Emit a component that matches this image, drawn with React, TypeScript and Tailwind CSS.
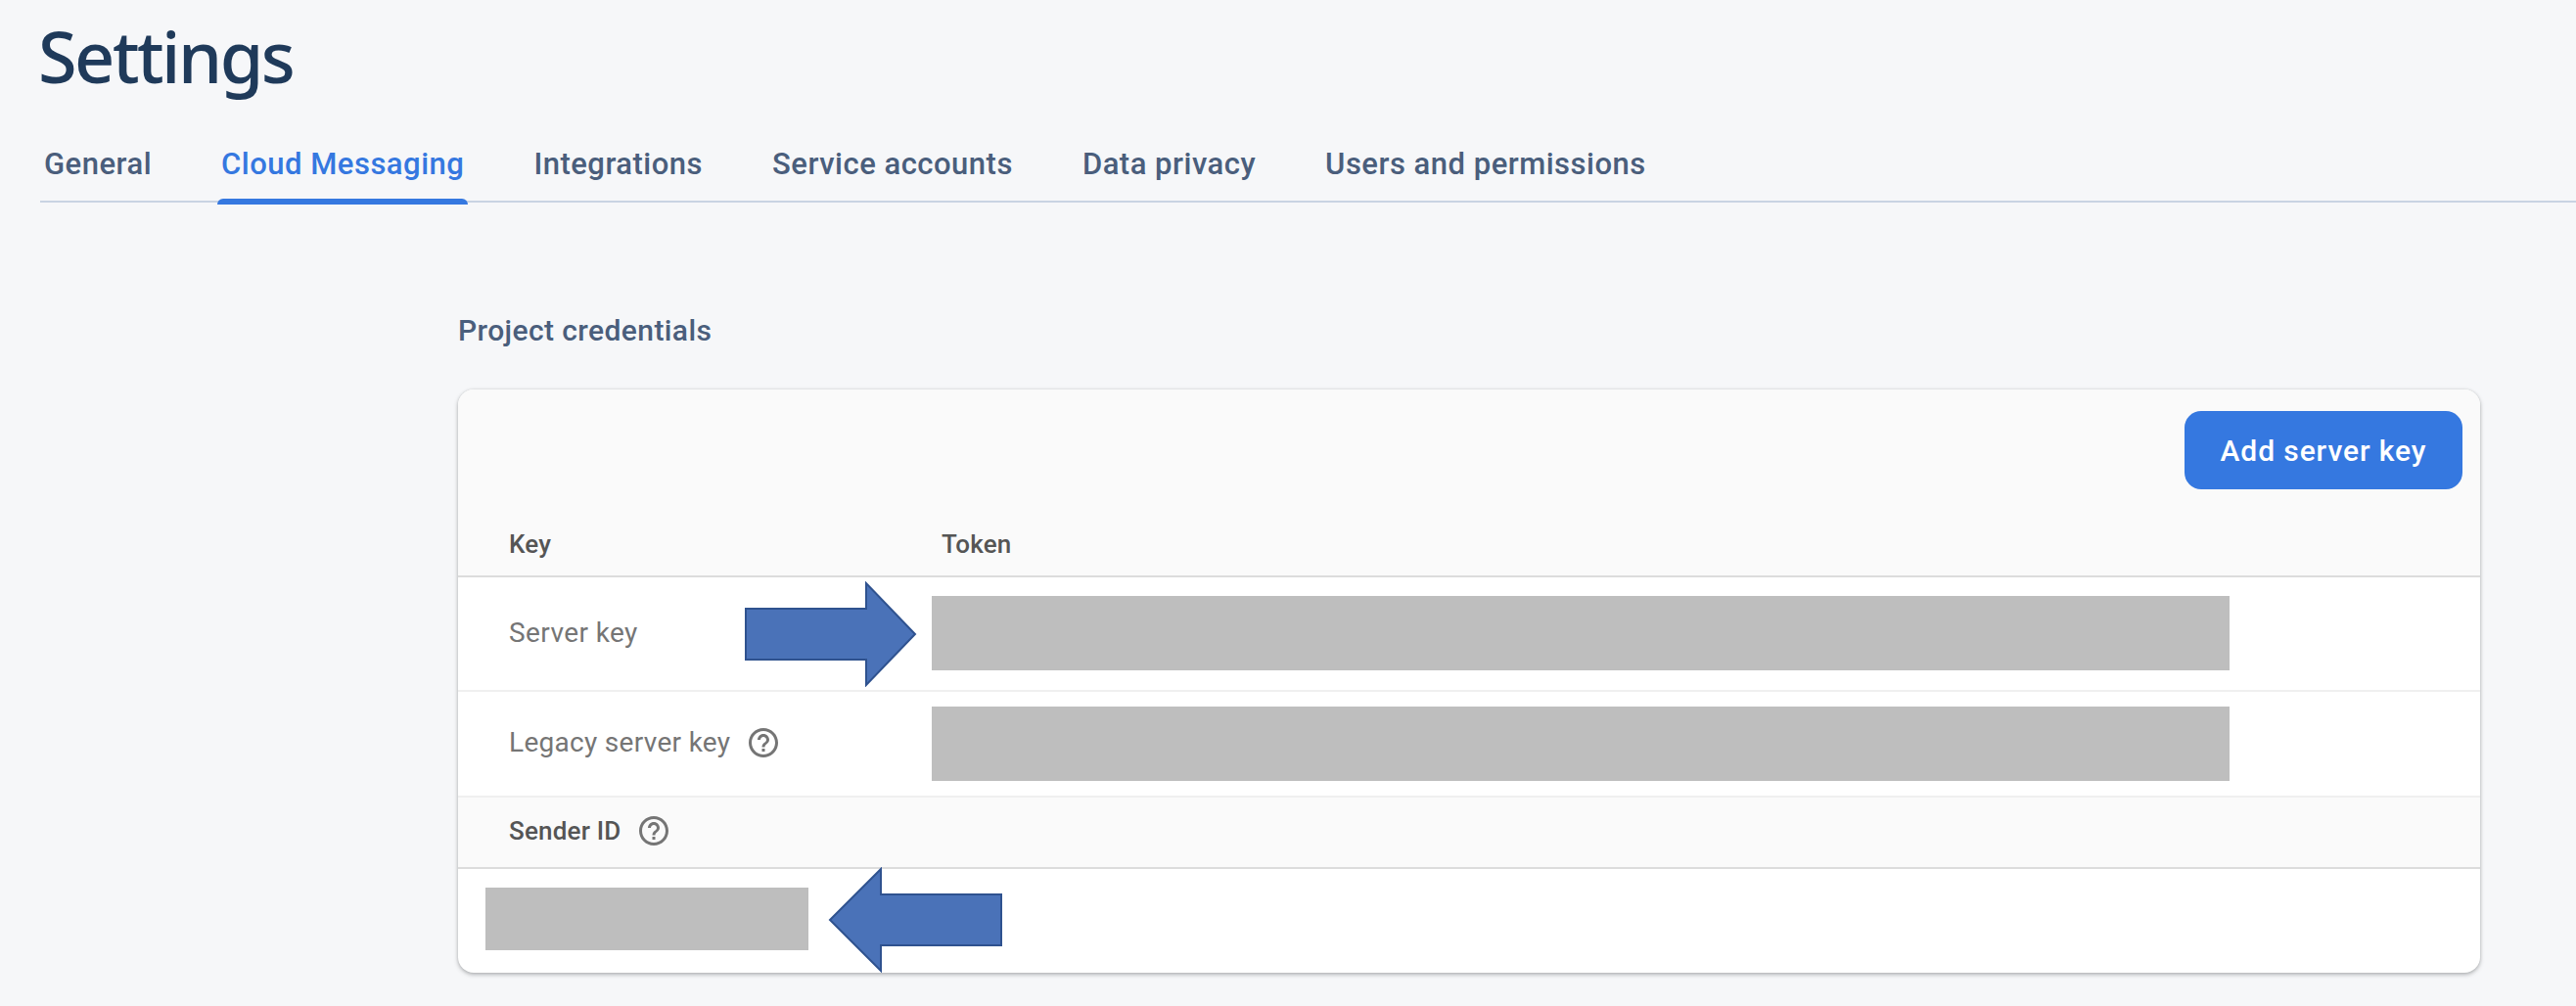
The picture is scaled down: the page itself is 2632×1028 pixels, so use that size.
const tabs = ["General", "Cloud Messaging", "Integrations", "Service accounts", "Data privacy", "Users and permissions"];

const HelpIcon = () => (
  <svg viewBox="0 0 24 24" className="w-9 h-9 shrink-0" fill="#757575">
    <path d="M11 18h2v-2h-2v2zm1-16C6.48 2 2 6.48 2 12s4.48 10 10 10 10-4.48 10-10S17.52 2 12 2zm0 18c-4.41 0-8-3.59-8-8s3.59-8 8-8 8 3.59 8 8-3.59 8-8 8zm0-14c-2.21 0-4 1.79-4 4h2c0-1.1.9-2 2-2s2 .9 2 2c0 2-3 1.75-3 5h2c0-2.25 3-2.5 3-5 0-2.21-1.79-4-4-4z" />
  </svg>
);

const Redacted = ({ className }: { className: string }) => <div className={`bg-[#bebebe] ${className}`}></div>;

export default function App() {
  return (
    <div className="w-[2632px] h-[1028px] overflow-hidden bg-[#f6f7f9] font-['Roboto',sans-serif]">
      <h1 className="pl-[39px] pt-[14px] h-[94px] text-[72px] leading-[86px] font-medium text-[#1f3a5a] font-['Noto_Sans',sans-serif] tracking-[-2.5px]">
        Settings
      </h1>
      <div className="ml-[41px] mt-[49px] h-[64px] flex gap-[63px] border-b-2 border-[#c9d3e3]">
        {tabs.map((tab, i) => (
          <div
            key={tab}
            className={`relative h-[64px] px-[4px] pt-[5px] text-[31px] leading-[40px] tracking-[0.5px] font-medium ${
              i === 1 ? "text-[#3578e0]" : "text-[#4a5e7c]"
            }`}
          >
            {tab}
            {i === 1 && (
              <div className="absolute left-0 right-0 bottom-[-2px] h-[6px] bg-[#3578e0] rounded-t-[6px]"></div>
            )}
          </div>
        ))}
      </div>
      <div className="ml-[468px] w-[2066px] mt-[111px]">
        <h2 className="text-[30px] leading-[40px] font-medium tracking-[0.4px] text-[#4a5e7c]">Project credentials</h2>
        <div className="relative mt-[40px] h-[596px] rounded-[16px] bg-white shadow-[0_2px_4px_rgba(60,64,67,0.35),0_0_3px_rgba(60,64,67,0.15)] overflow-hidden">
          <div className="h-[192px] bg-[#fafafa] border-b-2 border-[#dcdcdc] relative">
            <div className="flex justify-end pt-[22px] pr-[18px]">
              <button className="w-[284px] h-[80px] rounded-[17px] bg-[#3578e0] text-white text-[30px] font-medium tracking-[0.9px]">
                Add server key
              </button>
            </div>
            <div className="flex mt-[38px] text-[26px] leading-[36px] tracking-[0.2px] font-medium text-[#555555]">
              <div className="w-[494px] pl-[52px]">Key</div>
              <div>Token</div>
            </div>
          </div>
          <div className="h-[117px] pb-[1px] flex items-center border-b-2 border-[#f0f0f0]">
            <div className="w-[484px] pl-[52px] text-[28px] tracking-[0.4px] text-[#757575]">Server key</div>
            <Redacted className="w-[1326px] h-[76px]" />
          </div>
          <div className="h-[108px] flex items-center border-b-2 border-[#f0f0f0]">
            <div className="w-[484px] pl-[52px] pb-[3px] flex items-center gap-[16px] text-[28px] tracking-[0.3px] text-[#757575]">
              Legacy server key <HelpIcon />
            </div>
            <Redacted className="w-[1326px] h-[76px]" />
          </div>
          <div className="h-[73px] bg-[#fafafa] flex items-center gap-[15px] pl-[52px] pb-[3px] border-b-2 border-[#dcdcdc] text-[26px] tracking-[0.2px] font-medium text-[#555555]">
            Sender ID <HelpIcon />
          </div>
          <div className="pl-[28px] pt-[19px]">
            <Redacted className="w-[330px] h-[64px]" />
          </div>
          <svg className="absolute left-[292px] top-[196px]" width="178" height="108" viewBox="0 0 178 108">
            <path d="M2 28H125V2L175 54L125 106V80H2Z" fill="#4a72b8" stroke="#2f528f" strokeWidth="2" />
          </svg>
          <svg className="absolute left-[378px] top-[488px]" width="180" height="108" viewBox="0 0 180 108">
            <path d="M177 28H54V2L2 54L54 106V80H177Z" fill="#4a72b8" stroke="#2f528f" strokeWidth="2" />
          </svg>
        </div>
      </div>
    </div>
  );
}
